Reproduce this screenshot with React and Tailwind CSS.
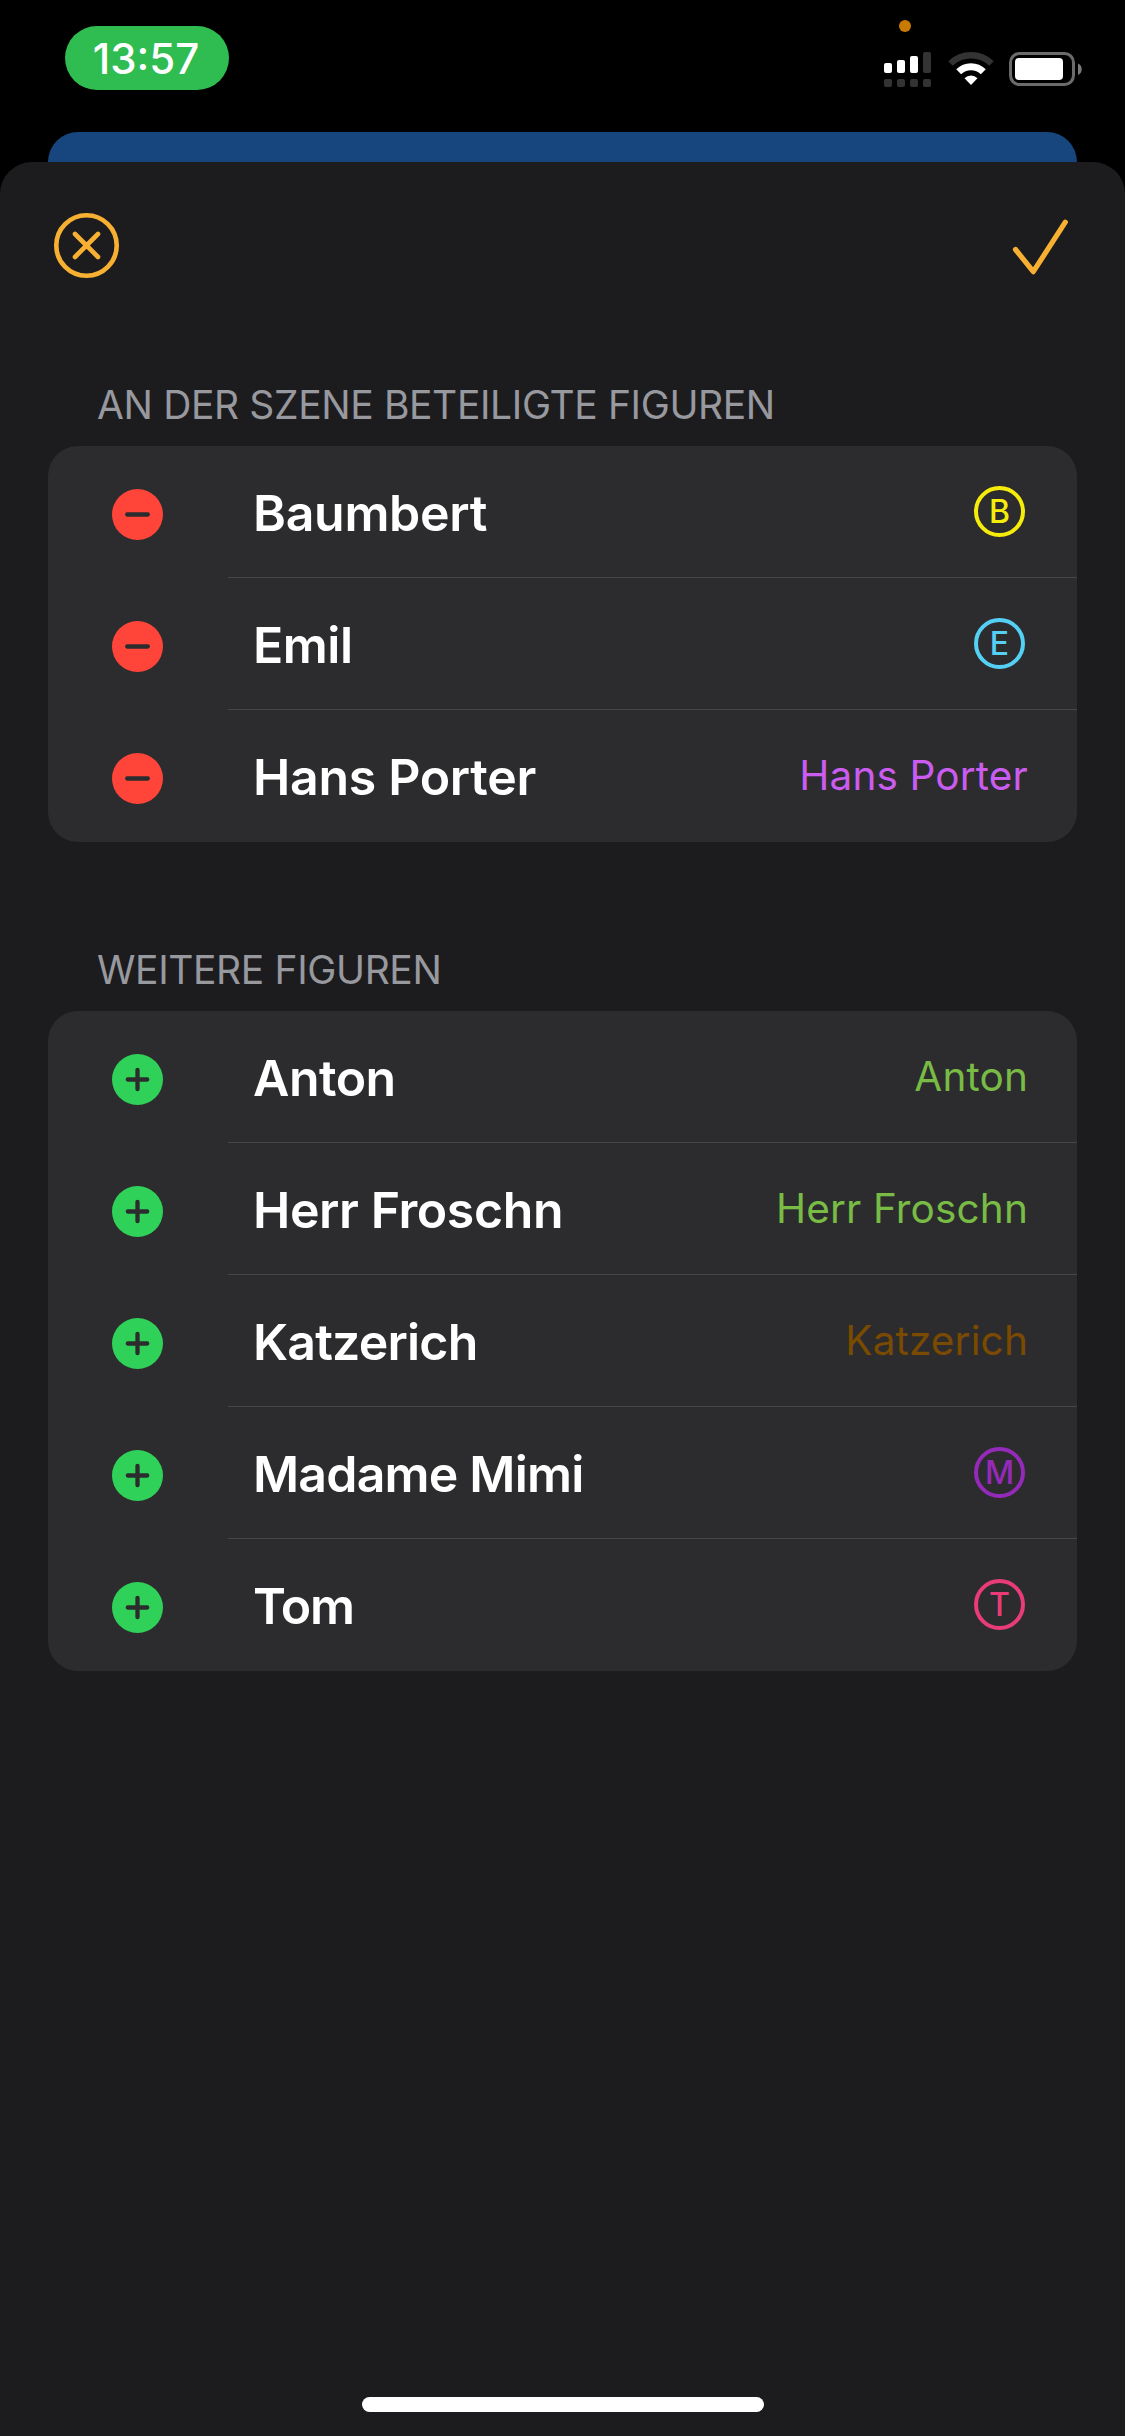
import React from 'react';

const involved = [
  { id: 1, name: 'Baumbert', badge: 'B', color: 'text-[#f5ec0c]', tracking: 'tracking-[-0.3px]' },
  { id: 2, name: 'Emil', badge: 'E', color: 'text-[#55d0f5]', tracking: 'tracking-[-0.5px]' },
  { id: 3, name: 'Hans Porter', color: 'text-[#cb5cf0]', tracking: 'tracking-[-0.3px]' },
];

const others = [
  { id: 4, name: 'Anton', color: 'text-[#78bb45]', tracking: 'tracking-[-0.5px]' },
  { id: 5, name: 'Herr Froschn', color: 'text-[#78bb45]', tracking: 'tracking-[-0.4px]' },
  { id: 6, name: 'Katzerich', color: 'text-[#7a4a00]', tracking: 'tracking-[-0.8px]' },
  { id: 7, name: 'Madame Mimi', badge: 'M', color: 'text-[#942ab8]', tracking: 'tracking-[-0.8px]' },
  { id: 8, name: 'Tom', badge: 'T', color: 'text-[#e83b78]', tracking: 'tracking-[-1.3px]' },
];

const StatusBar = () => (
  <div className="flex h-[132px] items-start justify-between pl-[65px] pr-[42px]">
    <div className="mt-[26px] flex h-16 w-[164px] items-center justify-center rounded-full bg-[#2fbc50] pb-[5px] pr-0.5 pt-1.5 text-[42px] font-medium leading-none text-white">
      13:57
    </div>
    <svg className="h-[92px] w-[200px]" viewBox="883 0 200 92">
      <circle cx="905" cy="26" r="6" fill="#c97a04" />
      <g fill="#fff">
        <rect x="884" y="63" width="8" height="10" rx="2" />
        <rect x="897" y="60" width="8" height="13" rx="2" />
        <rect x="910" y="56" width="8" height="17" rx="2" />
      </g>
      <g fill="#333">
        <rect x="923" y="52" width="8" height="21" rx="2" />
        <rect x="884" y="79" width="8" height="8" rx="2" />
        <rect x="897" y="79" width="8" height="8" rx="2" />
        <rect x="910" y="79" width="8" height="8" rx="2" />
        <rect x="923" y="79" width="8" height="8" rx="2" />
      </g>
      <path d="M950.5 63.5a29.5 29.5 0 0 1 41 0" fill="none" stroke="#333" strokeWidth="6.5" />
      <path d="M958.7 71.7a17.5 17.5 0 0 1 24.6 0" fill="none" stroke="#fff" strokeWidth="7" />
      <path d="M971 85l-6.5-6.8a9.3 9.3 0 0 1 13 0z" fill="#fff" />
      <rect x="1010.5" y="53.5" width="63" height="31" rx="9" fill="none" stroke="#6b6b6b" strokeWidth="3" />
      <rect x="1015" y="58" width="48" height="22" rx="4" fill="#fff" />
      <path d="M1078 63.5c5 2 5 9.5 0 11.5z" fill="#7a7a7a" />
    </svg>
  </div>
);

const ToggleIcon = ({ type }) => (
  <svg className="mt-[5px] size-[51px]" viewBox="0 0 51 51">
    <circle cx="25.5" cy="25.5" r="25.5" fill={type === 'add' ? '#30d158' : '#ff453a'} />
    <path
      d={type === 'add' ? 'M15.8 25.5h19.4M25.5 15.8v19.4' : 'M15.2 25.5h20.6'}
      stroke="#2c2c2e"
      strokeWidth="4.3"
      strokeLinecap="round"
    />
  </svg>
);

const Row = ({ figure, type, last }) => (
  <div className="flex h-[132px] pl-16">
    <div className="flex w-[116px] items-center">
      <ToggleIcon type={type} />
    </div>
    <div
      className={`flex flex-1 items-center justify-between border-[#464648] pl-[25px] ${last ? 'border-b-0 pb-px' : 'border-b'}`}
    >
      <span className={`pt-[3px] text-[50px] font-semibold leading-none text-white ${figure.tracking}`}>{figure.name}</span>
      {figure.badge ? (
        <span
          className={`mr-[52px] flex size-[51px] items-center justify-center rounded-full border-4 border-current text-[32px] font-[550] leading-none ${figure.color}`}
        >
          {figure.badge}
        </span>
      ) : (
        <span className={`mr-[49px] pt-0.5 text-[40.5px] leading-none tracking-[0.15px] ${figure.color}`}>
          {figure.name}
        </span>
      )}
    </div>
  </div>
);

const Section = ({ title, figures, type }) => (
  <section>
    <h2 className="mb-[21px] mt-px pl-[49px] text-[39px] leading-[40px] tracking-[-0.37px] text-[#98989f]">{title}</h2>
    <div className="overflow-hidden rounded-[30px] bg-[#2c2c2e]">
      {figures.map((figure, index) => (
        <Row key={figure.id} figure={figure} type={type} last={index === figures.length - 1} />
      ))}
    </div>
  </section>
);

const App = () => {
  return (
    <div className="flex h-[2436px] w-[1125px] flex-col overflow-hidden bg-black font-['Inter','Liberation_Sans',sans-serif]">
      <StatusBar />
      {/* edge of the view lying behind the sheet */}
      <div className="mx-12 h-[60px] shrink-0 rounded-t-[30px] bg-[#17457d]" />
      <main className="-mt-[30px] flex flex-1 flex-col rounded-t-[32px] bg-[#1c1c1e] px-12">
        <div className="flex h-[222px] items-start justify-between">
          <button className="ml-1.5 mt-[51px]">
            <svg className="size-[65px]" viewBox="0 0 65 65" fill="none" stroke="#f8b032" strokeLinecap="round">
              <circle cx="32.5" cy="32.5" r="30.2" strokeWidth="4.6" />
              <path d="M21 21l23 23M44 21l-23 23" strokeWidth="4.6" />
            </svg>
          </button>
          <button className="mr-[8px] mt-[56px]">
            <svg className="h-[58px] w-[58px]" viewBox="1011 218 58 58" fill="none" stroke="#f8b032" strokeWidth="5.2">
              <path d="M1015.5 249.5l17.8 22.2 32-49.5" strokeLinecap="round" strokeLinejoin="round" />
            </svg>
          </button>
        </div>
        <div className="flex flex-col gap-[107px]">
          <Section title="AN DER SZENE BETEILIGTE FIGUREN" figures={involved} type="remove" />
          <Section title="WEITERE FIGUREN" figures={others} type="add" />
        </div>
        <div className="mb-6 mt-auto h-[15px] w-[402px] self-center rounded-full bg-white" />
      </main>
    </div>
  );
};

export default App;
